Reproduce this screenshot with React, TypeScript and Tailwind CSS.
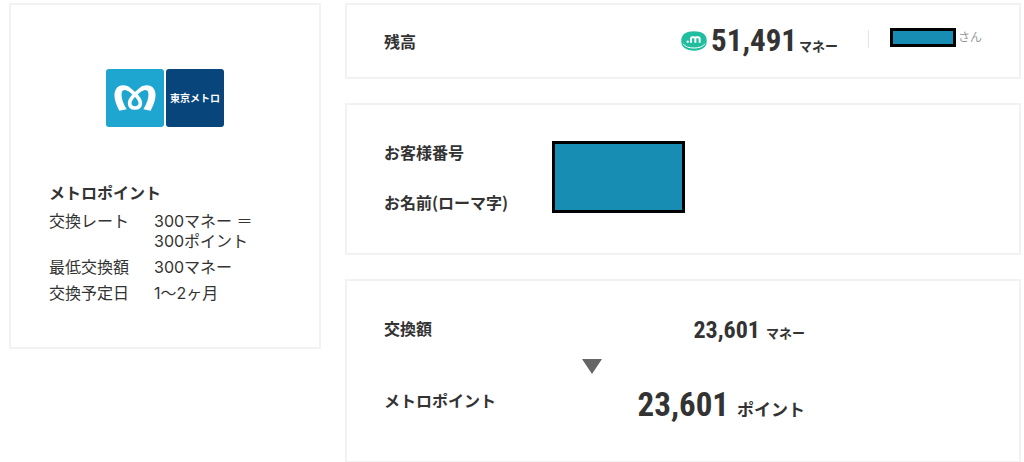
import type { ReactNode } from "react";

const jp = "font-['Noto_Sans_CJK_JP',sans-serif]";
const digits = "font-['Roboto_Condensed','Roboto',sans-serif]";

const rates = [
  { label: "交換レート", lines: ["300マネー ＝", "300ポイント"] },
  { label: "最低交換額", lines: ["300マネー"] },
  { label: "交換予定日", lines: ["1〜2ヶ月"] },
];

function Panel({ children, className }: { children: ReactNode; className: string }) {
  return <section className={`border-2 border-[#f2f2f2] bg-white ${className}`}>{children}</section>;
}

function MetroLogo() {
  return (
    <div className="flex justify-center gap-0.5">
      <svg viewBox="0 0 174 174" className="size-[58px]" aria-hidden="true">
        <rect width="174" height="174" rx="9" fill="#1fa6d0" />
        <path
          fill="#fff"
          d="M40 125 C29 103 20 80 29 62 C38 46 58 46 72 56 L66 67 C57 61 49 62 47 72 C45 85 52 106 62 121 Z"
        />
        <path
          fill="#fff"
          d="M134 125 C145 103 154 80 145 62 C136 46 116 46 102 56 L108 67 C117 61 125 62 127 72 C129 85 122 106 112 121 Z"
        />
        <path
          fill="none"
          stroke="#fff"
          strokeWidth="11"
          d="M61 56 C78 66 103 87 103 102 C103 112 97 117 87 117 C77 117 71 112 71 102 C71 87 96 66 113 56"
        />
      </svg>
      <div className="flex size-[58px] items-center justify-center rounded-[3px] bg-[#07457b] text-[10px] leading-none font-bold text-white">
        東京メトロ
      </div>
    </div>
  );
}

function MoneyIcon() {
  return (
    <svg viewBox="0 0 78 60" className="h-5 w-[26px]" aria-hidden="true">
      <path
        fill="#20bd9f"
        d="M39 1 C62 1 77 11 77 27 V33 C77 49 61 59 39 59 C17 59 1 49 1 33 V27 C1 11 16 1 39 1 Z"
      />
      <path fill="none" stroke="#fff" strokeWidth="3" d="M6 38 C13 48 25 51 39 51 C53 51 65 48 72 38" />
      <circle cx="20" cy="32" r="3.5" fill="#fff" />
      <path
        fill="none"
        stroke="#fff"
        strokeWidth="6"
        d="M30 35 V23 Q30 19 34 19 H39 Q43 19 43 23 V35 M43 23 Q43 19 47 19 H51 Q56 19 56 24 V35"
      />
    </svg>
  );
}

export default function App() {
  return (
    <main className={`flex items-start gap-6 bg-white pt-[3px] pr-[3px] pl-[9px] text-base text-[#333] ${jp}`}>
      <Panel className="w-[312px] shrink-0 px-[38px] pt-16 pb-11">
        <MetroLogo />
        <h2 className="mt-[53px] mb-[7px] leading-6 font-bold">メトロポイント</h2>
        <dl className="grid grid-cols-[81px_1fr] gap-x-6 gap-y-1.5 font-['Inter','Noto_Sans_CJK_JP',sans-serif] leading-5">
          {rates.map((rate) => (
            <div key={rate.label} className="contents">
              <dt>{rate.label}</dt>
              <dd>
                {rate.lines.map((line) => (
                  <span key={line} className="block whitespace-nowrap">
                    {line}
                  </span>
                ))}
              </dd>
            </div>
          ))}
        </dl>
      </Panel>

      <div className="flex min-w-0 flex-1 flex-col gap-6">
        <Panel className="flex h-[76px] items-center justify-between px-[37px]">
          <h2 className="leading-6 font-bold">残高</h2>
          <div className="flex items-center">
            <MoneyIcon />
            <p className="ml-1 flex items-baseline gap-0.5 font-bold">
              <span className={`text-[31px] leading-9 ${digits}`}>51,491</span>
              <span className="text-[13px]">マネー</span>
            </p>
            <span className="mb-1 ml-[30px] h-[18px] w-px bg-[#e5e5e5]" />
            <p className="mb-2 ml-[21px] flex items-center gap-0.5 text-xs text-[#999]">
              <span className="h-[19px] w-[66px] border-3 border-black bg-[#178db4]" />
              さん
            </p>
          </div>
        </Panel>

        <Panel className="flex items-center pb-1 pl-[37px]">
          <dl className="flex h-[144px] w-[168px] flex-col justify-center gap-[26px] leading-6 font-bold">
            <dt>お客様番号</dt>
            <dt className="whitespace-nowrap">お名前(ローマ字)</dt>
          </dl>
          <div className="h-[72px] w-[133px] border-3 border-black bg-[#178db4]" />
        </Panel>

        <Panel className="grid grid-cols-[168px_253px] pt-[29px] pb-8 pl-[37px] font-bold">
          <h2 className="leading-9">交換額</h2>
          <p className="flex items-baseline justify-end gap-1.5">
            <span className={`text-[24px] leading-10 ${digits}`}>23,601</span>
            <span className="text-[13px]">マネー</span>
          </p>
          <svg viewBox="0 0 20 15" className="col-start-2 mt-[9px] ml-[30px] h-[15px] w-5" aria-hidden="true">
            <path d="M0 0H20L10 15Z" fill="#666" />
          </svg>
          <h2 className="col-start-1 mt-1.5 leading-10">メトロポイント</h2>
          <p className="mt-[7px] flex items-baseline justify-end gap-2">
            <span className={`text-[33px] leading-[48px] ${digits}`}>23,601</span>
            <span className="text-[17px]">ポイント</span>
          </p>
        </Panel>
      </div>
    </main>
  );
}
